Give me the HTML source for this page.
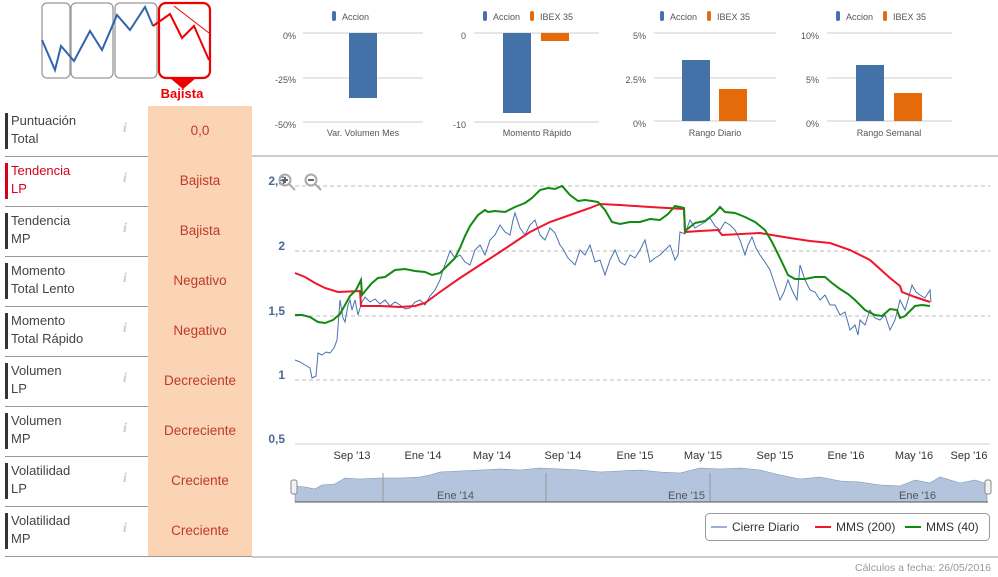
<!DOCTYPE html>
<html><head><meta charset="utf-8"><style>
body{margin:0;width:998px;height:577px;background:#fff;font-family:"Liberation Sans",sans-serif;position:relative;overflow:hidden}
.row{position:absolute;left:5px;width:247px;height:50px;border-bottom:1px solid #999}
.bar{position:absolute;left:0;top:7px;width:3px;height:36px;background:#333}
.lab{position:absolute;left:6px;top:6px;font-size:13px;line-height:18px;color:#444}
.inf{position:absolute;left:118px;top:15px;font-size:14px;color:#ccc;font-style:italic;font-family:"Liberation Serif",serif;font-weight:bold}
.val{position:absolute;left:143px;top:0;width:104px;height:50px;background:#fad4b4;color:#c0392b;font-size:13.5px;text-align:center;line-height:50px}
svg text{font-family:"Liberation Sans",sans-serif}
</style></head><body>
<svg width="998" height="577" style="position:absolute;left:0;top:0">
<!-- top-left icon -->
<g fill="none" stroke="#999" stroke-width="1.3">
<rect x="42" y="3" width="28" height="75" rx="5"/>
<rect x="71" y="3" width="42" height="75" rx="5"/>
<rect x="115" y="3" width="42" height="75" rx="5"/>
</g>
<rect x="159" y="3" width="51" height="75" rx="7" fill="none" stroke="#e00" stroke-width="2.2"/>
<path d="M170 78 L183 89 L196 78Z" fill="#e00"/>
<polyline points="42,40 55,70 61,46 74,61 90,31 102,50 117,15 130,30 145,7 153,26" fill="none" stroke="#2f65ac" stroke-width="2"/>
<polyline points="153,26 170,14 182,38 194,26 209,60" fill="none" stroke="#e00" stroke-width="2"/>
<line x1="174" y1="6" x2="209" y2="33" stroke="#e00" stroke-width="1"/>
<text x="182" y="98" fill="#e00" font-size="13" font-weight="bold" text-anchor="middle">Bajista</text>
<!-- small charts -->
<g font-size="9" fill="#555">
<rect x="332" y="11" width="4" height="10" rx="2" fill="#4472a8"/><text x="342" y="20">Accion</text>
<line x1="303" y1="33" x2="423" y2="33" stroke="#ccc"/><line x1="303" y1="78" x2="423" y2="78" stroke="#ccc"/><line x1="303" y1="122" x2="423" y2="122" stroke="#ccc"/>
<text x="296" y="39" text-anchor="end">0%</text><text x="296" y="83" text-anchor="end">-25%</text><text x="296" y="128" text-anchor="end">-50%</text>
<rect x="349" y="33" width="28" height="65" fill="#4472a8"/>
<text x="363" y="136" text-anchor="middle">Var. Volumen Mes</text>

<rect x="483" y="11" width="4" height="10" rx="2" fill="#4472a8"/><text x="493" y="20">Accion</text>
<rect x="530" y="11" width="4" height="10" rx="2" fill="#e56a0a"/><text x="540" y="20">IBEX 35</text>
<line x1="474" y1="33" x2="599" y2="33" stroke="#ccc"/><line x1="474" y1="122" x2="599" y2="122" stroke="#ccc"/>
<text x="466" y="39" text-anchor="end">0</text><text x="466" y="128" text-anchor="end">-10</text>
<rect x="503" y="33" width="28" height="80" fill="#4472a8"/><rect x="541" y="33" width="28" height="8" fill="#e56a0a"/>
<text x="537" y="136" text-anchor="middle">Momento Rápido</text>

<rect x="660" y="11" width="4" height="10" rx="2" fill="#4472a8"/><text x="670" y="20">Accion</text>
<rect x="707" y="11" width="4" height="10" rx="2" fill="#e56a0a"/><text x="717" y="20">IBEX 35</text>
<line x1="654" y1="33" x2="776" y2="33" stroke="#ccc"/><line x1="654" y1="78" x2="776" y2="78" stroke="#ccc"/><line x1="654" y1="121" x2="776" y2="121" stroke="#ccc"/>
<text x="646" y="39" text-anchor="end">5%</text><text x="646" y="83" text-anchor="end">2.5%</text><text x="646" y="127" text-anchor="end">0%</text>
<rect x="682" y="60" width="28" height="61" fill="#4472a8"/><rect x="719" y="89" width="28" height="32" fill="#e56a0a"/>
<text x="715" y="136" text-anchor="middle">Rango Diario</text>

<rect x="836" y="11" width="4" height="10" rx="2" fill="#4472a8"/><text x="846" y="20">Accion</text>
<rect x="883" y="11" width="4" height="10" rx="2" fill="#e56a0a"/><text x="893" y="20">IBEX 35</text>
<line x1="827" y1="33" x2="952" y2="33" stroke="#ccc"/><line x1="827" y1="78" x2="952" y2="78" stroke="#ccc"/><line x1="827" y1="121" x2="952" y2="121" stroke="#ccc"/>
<text x="819" y="39" text-anchor="end">10%</text><text x="819" y="83" text-anchor="end">5%</text><text x="819" y="127" text-anchor="end">0%</text>
<rect x="856" y="65" width="28" height="56" fill="#4472a8"/><rect x="894" y="93" width="28" height="28" fill="#e56a0a"/>
<text x="889" y="136" text-anchor="middle">Rango Semanal</text>
</g>
<line x1="252" y1="156" x2="998" y2="156" stroke="#999"/>
<!-- main chart -->
<g stroke="#bbb" stroke-dasharray="4,3">
<line x1="295" y1="186" x2="990" y2="186"/><line x1="295" y1="251" x2="990" y2="251"/><line x1="295" y1="316" x2="990" y2="316"/><line x1="295" y1="380" x2="990" y2="380"/>
</g>
<line x1="295" y1="444" x2="990" y2="444" stroke="#c0d0e0"/>
<g font-size="12" fill="#4a6a95" font-weight="bold" text-anchor="end">
<text x="285" y="185">2,5</text><text x="285" y="250">2</text><text x="285" y="315">1,5</text><text x="285" y="379">1</text><text x="285" y="443">0,5</text>
</g>
<g fill="none" stroke="#aaa" stroke-width="2"><circle cx="285" cy="180" r="5.5"/><line x1="289" y1="184" x2="295" y2="190"/><circle cx="311" cy="180" r="5.5"/><line x1="315" y1="184" x2="321" y2="190"/></g>
<line x1="282" y1="180" x2="288" y2="180" stroke="#666" stroke-width="2"/><line x1="285" y1="177" x2="285" y2="183" stroke="#666" stroke-width="2"/><line x1="308" y1="180" x2="314" y2="180" stroke="#666" stroke-width="2"/>
<g font-size="11" fill="#333" text-anchor="middle">
<text x="352" y="459">Sep '13</text><text x="423" y="459">Ene '14</text><text x="492" y="459">May '14</text><text x="563" y="459">Sep '14</text><text x="635" y="459">Ene '15</text><text x="703" y="459">May '15</text><text x="775" y="459">Sep '15</text><text x="846" y="459">Ene '16</text><text x="914" y="459">May '16</text><text x="969" y="459">Sep '16</text>
</g>
<polyline fill="none" stroke="#4a72ae" stroke-width="1" points="295,360 300,362 305,365 310,368 312,378 316,376 318,353 322,355 326,352 330,353 334,348 337,340 340,300 343,318 345,322 348,305 350,300 352,310 355,300 358,315 360,308 362,302 365,297 370,302 375,299 380,304 385,300 390,306 395,302 400,305 405,309 410,308 415,302 420,300 425,305 430,296 435,290 440,280 443,270 446,262 450,251 455,258 460,255 465,262 470,265 475,250 480,245 485,255 490,240 495,235 500,225 505,232 510,235 513,220 515,213 520,228 525,235 530,225 535,220 540,235 545,240 550,228 555,233 560,245 563,249 568,258 575,265 580,250 585,255 590,245 595,262 600,260 605,275 610,260 615,250 620,262 625,265 630,255 635,258 640,250 645,240 650,262 655,258 660,255 665,250 670,245 675,260 678,255 680,232 685,234 690,220 695,228 700,225 705,222 710,218 715,226 720,230 725,222 730,225 735,230 740,240 745,255 748,245 752,237 756,248 760,255 765,262 770,270 775,285 780,300 784,292 788,280 792,290 797,300 800,265 805,280 810,290 815,292 820,300 825,295 830,305 835,305 840,315 845,312 850,330 855,325 858,335 860,320 865,325 870,310 875,318 880,320 885,315 890,330 895,320 900,300 905,310 908,300 912,285 916,292 920,295 925,298 930,290 931,302"/>
<polyline fill="none" stroke="#f0152b" stroke-width="2" points="295,273 305,277 315,283 325,288 338,292 360,291 361,306 380,306 400,307 415,306 425,303 440,292 460,278 480,265 500,252 515,242 530,232 550,222 570,215 590,208 600,204 620,205 650,207 684,209 685,232 700,231 718,230 722,235 760,233 790,238 810,241 830,243 850,250 870,260 890,278 900,286 902,292 915,297 930,302"/>
<polyline fill="none" stroke="#108a10" stroke-width="2" points="295,315 302,315 310,317 318,322 325,323 333,320 340,314 345,305 350,296 356,290 361,280 362,295 366,290 372,283 378,278 385,277 395,270 405,269 415,271 425,272 432,275 440,273 447,266 455,258 460,248 465,236 470,226 478,215 485,210 488,212 495,211 505,212 515,207 525,203 532,198 540,190 548,188 555,189 562,186 570,195 578,201 585,200 592,201 598,202 605,210 612,222 620,224 630,222 640,222 650,219 660,220 668,214 675,206 680,207 684,208 685,231 695,223 705,221 715,213 720,207 725,212 735,213 745,217 755,222 765,230 772,242 780,258 788,275 795,279 805,279 815,277 825,277 832,283 840,289 848,294 855,300 865,310 875,315 882,316 890,309 897,310 900,318 905,316 915,306 922,305 930,306"/>
<!-- navigator -->
<path d="M295,486 L305,487 L315,489 L322,485 L335,484 L345,478 L360,479 L380,478 L400,478 L420,477 L430,475 L440,472 L460,471 L480,470 L500,469 L520,470 L540,468 L560,469 L580,470 L600,472 L620,471 L640,470 L660,472 L680,473 L700,468 L720,469 L740,468 L760,470 L780,475 L800,479 L820,477 L840,481 L860,482 L880,485 L900,486 L915,480 L930,483 L940,477 L960,483 L975,480 L987,484 L987,502 L295,502Z" fill="#b3c4dc" stroke="#7890b8" stroke-width="0.6"/>
<g stroke="#999"><line x1="383" y1="473" x2="383" y2="502"/><line x1="546" y1="473" x2="546" y2="502"/><line x1="710" y1="473" x2="710" y2="502"/><line x1="295" y1="502" x2="988" y2="502" stroke="#555"/></g>
<g font-size="11" fill="#555"><text x="437" y="499">Ene '14</text><text x="668" y="499">Ene '15</text><text x="899" y="499">Ene '16</text></g>
<rect x="291" y="480" width="6" height="14" rx="2" fill="#f2f2f2" stroke="#888"/><rect x="985" y="480" width="6" height="14" rx="2" fill="#f2f2f2" stroke="#888"/>
<!-- legend -->
<rect x="705.5" y="513.5" width="284" height="27" rx="4" fill="#fff" stroke="#999"/>
<g font-size="12" fill="#333">
<line x1="711" y1="527" x2="727" y2="527" stroke="#9bb0d0" stroke-width="2"/><text x="732" y="531">Cierre Diario</text>
<line x1="815" y1="527" x2="831" y2="527" stroke="#f0152b" stroke-width="2"/><text x="836" y="531">MMS (200)</text>
<line x1="905" y1="527" x2="921" y2="527" stroke="#108a10" stroke-width="2"/><text x="926" y="531">MMS (40)</text>
</g>
<line x1="252" y1="557" x2="998" y2="557" stroke="#999"/>
<text x="991" y="571" font-size="10.5" fill="#999" text-anchor="end">Cálculos a fecha: 26/05/2016</text>
</svg>

<div class="row" style="top:106px"><div class="bar"></div><div class="lab">Puntuación<br>Total</div><div class="inf">i</div><div class="val">0,0</div></div>
<div class="row" style="top:156px"><div class="bar" style="background:#d9001b"></div><div class="lab" style="color:#d9001b">Tendencia<br>LP</div><div class="inf">i</div><div class="val">Bajista</div></div>
<div class="row" style="top:206px"><div class="bar"></div><div class="lab">Tendencia<br>MP</div><div class="inf">i</div><div class="val">Bajista</div></div>
<div class="row" style="top:256px"><div class="bar"></div><div class="lab">Momento<br>Total Lento</div><div class="inf">i</div><div class="val">Negativo</div></div>
<div class="row" style="top:306px"><div class="bar"></div><div class="lab">Momento<br>Total Rápido</div><div class="inf">i</div><div class="val">Negativo</div></div>
<div class="row" style="top:356px"><div class="bar"></div><div class="lab">Volumen<br>LP</div><div class="inf">i</div><div class="val">Decreciente</div></div>
<div class="row" style="top:406px"><div class="bar"></div><div class="lab">Volumen<br>MP</div><div class="inf">i</div><div class="val">Decreciente</div></div>
<div class="row" style="top:456px"><div class="bar"></div><div class="lab">Volatilidad<br>LP</div><div class="inf">i</div><div class="val">Creciente</div></div>
<div class="row" style="top:506px"><div class="bar"></div><div class="lab">Volatilidad<br>MP</div><div class="inf">i</div><div class="val">Creciente</div></div>
</body></html>
